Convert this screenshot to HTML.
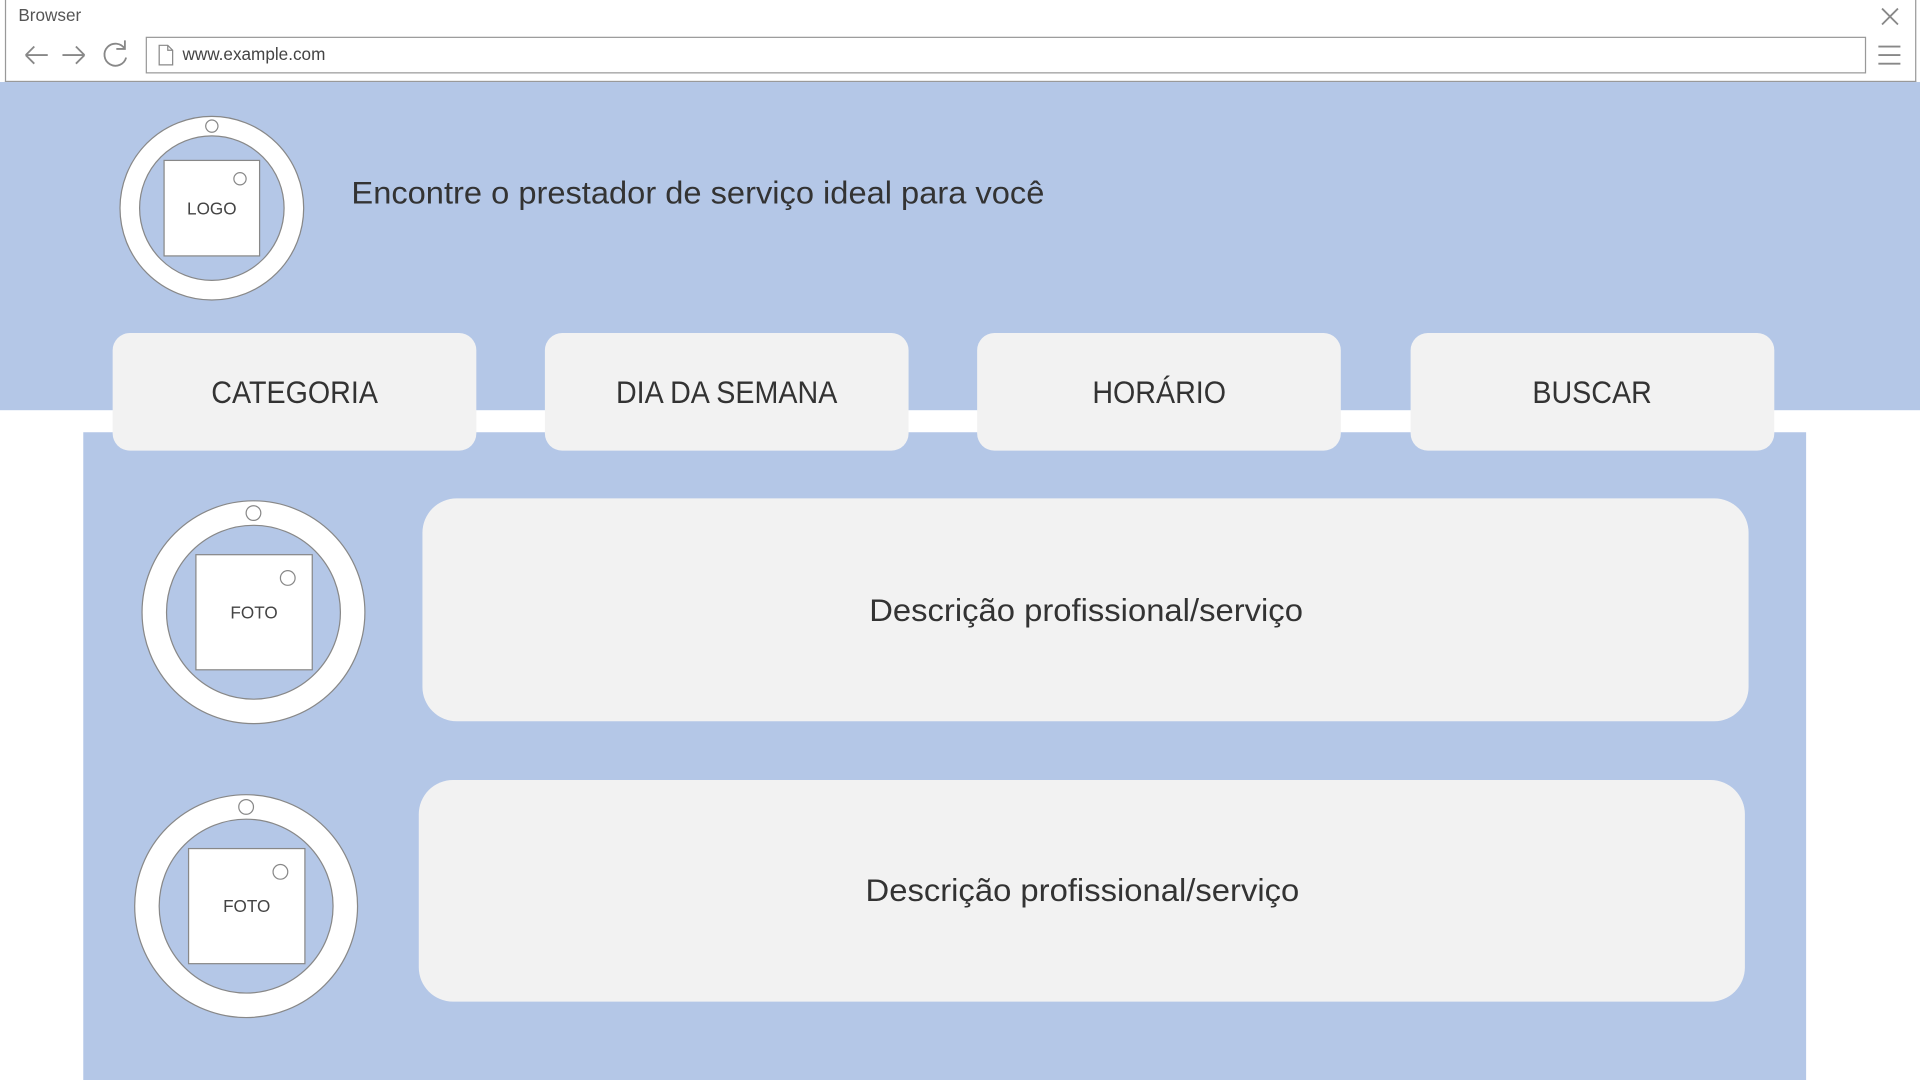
<!DOCTYPE html>
<html><head><meta charset="utf-8"><style>
html,body{margin:0;padding:0;width:1920px;height:1080px;overflow:hidden;background:#fff}
#w{position:absolute;left:0;top:0;width:1568px;height:882px;transform:scale(1.22449);transform-origin:0 0;font-family:"Liberation Sans",sans-serif;color:#333}
.a{position:absolute}
.btn{position:absolute;top:272px;width:297px;height:96px;background:#f2f2f2;border-radius:14px;font-size:26px;display:flex;align-items:center;justify-content:center;color:#333}
.btn span{display:inline-block;transform:scaleX(0.9)}
.card{position:absolute;background:#f2f2f2;border-radius:28px;font-size:26px;display:flex;align-items:center;justify-content:center;color:#333}
.card span{display:inline-block;transform:scaleX(1.03)}
</style></head><body><div id="w">
<div class="a" style="left:4px;top:0;width:1559px;height:66px;border:1px solid #999;border-top:none;background:#fff"></div>
<div class="a" style="left:15px;top:4px;font-size:14px;color:#555">Browser</div>
<div class="a" style="left:119px;top:30px;width:1403px;height:28px;border:1px solid #999"></div>
<div class="a" style="left:149px;top:36px;font-size:14px;color:#444">www.example.com</div>
<svg class="a" style="left:0;top:0" width="1568" height="70" fill="none" stroke="#888" stroke-width="1.5">
<path d="M21 45h18M21 45l7-7M21 45l7 7"/><path d="M51 45h18M69 45l-7-7M69 45l-7 7"/>
<path d="M102 40a9 9 0 1 0 1 7M102 33v7h-7"/>
<path d="M130 37h7l4 4v12h-11z M137 37v4h4" stroke-width="1"/>
<path d="M1537 7l13 13M1550 7l-13 13"/><path d="M1534 38h18M1534 45h18M1534 52h18"/>
</svg>
<div class="a" style="left:0;top:67px;width:1568px;height:268px;background:#b4c7e7"></div>
<div class="a" style="left:68px;top:353px;width:1407px;height:529px;background:#b4c7e7"></div>
<svg class="a" style="left:0;top:0" width="1568" height="882" stroke="#888" stroke-width="1">
<circle cx="173" cy="170" r="75" fill="#fff"/><circle cx="173" cy="170" r="59" fill="#b4c7e7"/>
<rect x="134" y="131" width="78" height="78" fill="#fff"/><circle cx="173" cy="103" r="5" fill="#fff"/><circle cx="196" cy="146" r="5" fill="#fff"/>
<circle cx="207" cy="500" r="91" fill="#fff"/><circle cx="207" cy="500" r="71" fill="#b4c7e7"/>
<rect x="160" y="453" width="95" height="94" fill="#fff"/><circle cx="207" cy="419" r="6" fill="#fff"/><circle cx="235" cy="472" r="6" fill="#fff"/>
<circle cx="201" cy="740" r="91" fill="#fff"/><circle cx="201" cy="740" r="71" fill="#b4c7e7"/>
<rect x="154" y="693" width="95" height="94" fill="#fff"/><circle cx="201" cy="659" r="6" fill="#fff"/><circle cx="229" cy="712" r="6" fill="#fff"/>
</svg>
<div class="a" style="left:134px;top:162px;width:78px;text-align:center;font-size:14px;color:#444">LOGO</div>
<div class="a" style="left:160px;top:492px;width:95px;text-align:center;font-size:14px;color:#444">FOTO</div>
<div class="a" style="left:154px;top:732px;width:95px;text-align:center;font-size:14px;color:#444">FOTO</div>
<div class="a" style="left:287px;top:142px;font-size:26px;transform:scaleX(1.025);transform-origin:0 0">Encontre o prestador de serviço ideal para você</div>
<div class="btn" style="left:92px"><span>CATEGORIA</span></div>
<div class="btn" style="left:445px"><span>DIA DA SEMANA</span></div>
<div class="btn" style="left:798px"><span>HORÁRIO</span></div>
<div class="btn" style="left:1152px"><span>BUSCAR</span></div>
<div class="card" style="left:345px;top:407px;width:1083px;height:182px"><span>Descrição profissional/serviço</span></div>
<div class="card" style="left:342px;top:637px;width:1083px;height:181px"><span>Descrição profissional/serviço</span></div>
</div></body></html>
